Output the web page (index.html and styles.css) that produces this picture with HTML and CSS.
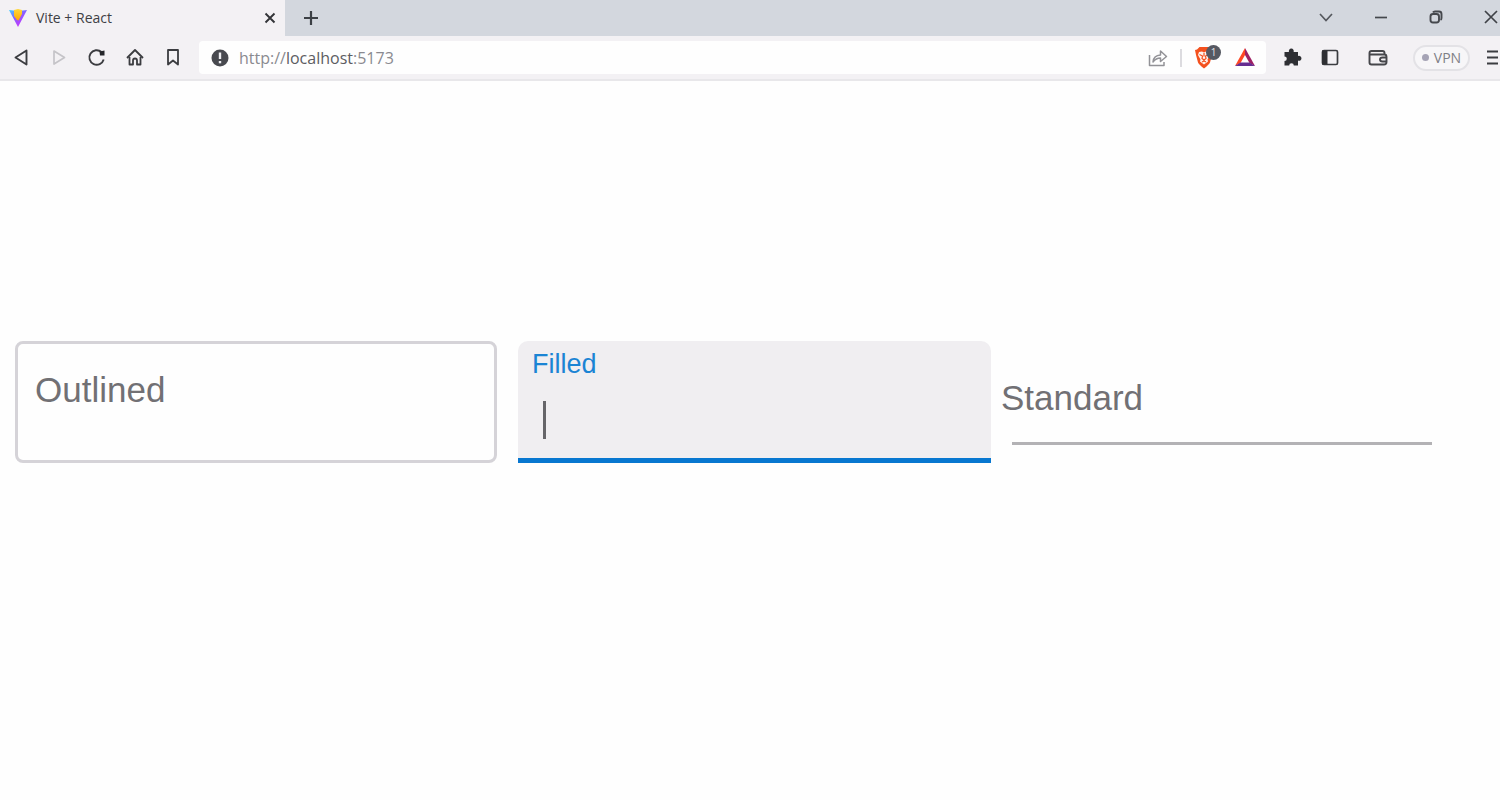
FILE: index.html
```html
<!DOCTYPE html>
<html lang="en">
<head>
    <meta charset="UTF-8">
    <title>Vite + React</title>
    <link rel="stylesheet" href="styles.css">
</head>
<body>
<header class="browser">
    <div class="tab-strip">
        <div class="tab">
            <svg class="icon" width="20" height="20" viewBox="0 0 20 20">
                <defs>
                    <linearGradient id="vite" x1="0" y1="0" x2="0.6" y2="1">
                        <stop offset="0" stop-color="#41d1ff"/>
                        <stop offset="0.5" stop-color="#8b5cff"/>
                        <stop offset="1" stop-color="#c934fe"/>
                    </linearGradient>
                    <linearGradient id="bolt" x1="0" y1="0" x2="0" y2="1">
                        <stop offset="0" stop-color="#ffd83b"/>
                        <stop offset="1" stop-color="#ffa800"/>
                    </linearGradient>
                </defs>
                <path d="M1 2L10 3L19 2L10 19Z" fill="url(#vite)"/>
                <path d="M6 2L10 1L14 2L14 6L10.500 12.500L9 12L6 8Z" fill="url(#bolt)"/>
            </svg>
            <span class="tab-title">Vite + React</span>
            <button class="tool" type="button" aria-label="Close tab">
                <svg width="20" height="20" viewBox="0 0 20 20"><path d="M5.500 5.500L14.500 14.500M14.500 5.500L5.500 14.500" stroke="#333438" stroke-width="1.900"/></svg>
            </button>
        </div>
        <button class="tool new-tab" type="button" aria-label="New tab">
            <svg width="20" height="20" viewBox="0 0 20 20"><path d="M10 3V17M3 10H17" stroke="#3c4045" stroke-width="2.200"/></svg>
        </button>
        <div class="window-controls">
            <button class="tool" type="button" aria-label="Search tabs">
                <svg width="18" height="18" viewBox="0 0 18 18"><path d="M3 5L9 11.500L15 5" fill="none" stroke="#55585e" stroke-width="1.700"/></svg>
            </button>
            <button class="tool" type="button" aria-label="Minimize">
                <svg width="18" height="18" viewBox="0 0 18 18"><path d="M3 8.500H15" stroke="#45484d" stroke-width="1.700"/></svg>
            </button>
            <button class="tool" type="button" aria-label="Restore">
                <svg width="18" height="18" viewBox="0 0 18 18" fill="none" stroke="#45484d" stroke-width="1.900"><rect x="3.500" y="5" width="8.500" height="8.500" rx="2.500"/><path d="M6 3.500Q6.500 2.500 8 2.500H12Q14.500 2.500 14.500 5V9Q14.500 10.500 13.500 11"/></svg>
            </button>
            <button class="tool" type="button" aria-label="Close">
                <svg width="18" height="18" viewBox="0 0 18 18"><path d="M3 2L15 14M15 2L3 14" stroke="#3f4247" stroke-width="1.700"/></svg>
            </button>
        </div>
    </div>

    <div class="toolbar">
        <div class="nav-buttons">
            <button class="tool" type="button" aria-label="Back">
                <svg width="20" height="20" viewBox="0 0 20 20"><path d="M15.500 2.500L4.500 9.500L15.500 16.500Z" fill="none" stroke="#3b3c40" stroke-width="1.900" stroke-linejoin="round"/></svg>
            </button>
            <button class="tool" type="button" aria-label="Forward">
                <svg width="20" height="20" viewBox="0 0 20 20"><path d="M5 3L15.500 9.500L5 16Z" fill="none" stroke="#c5c4c8" stroke-width="1.700" stroke-linejoin="round"/></svg>
            </button>
            <button class="tool" type="button" aria-label="Reload">
                <svg width="20" height="20" viewBox="0 0 20 20"><path d="M14.500 4A7.300 7.300 0 1 0 16.700 11.500" fill="none" stroke="#3b3c40" stroke-width="1.900"/><path d="M17.500 2.500V7.500H13L12.500 3.500Z" fill="#25262a"/></svg>
            </button>
            <button class="tool" type="button" aria-label="Home">
                <svg width="20" height="20" viewBox="0 0 20 20" fill="none" stroke="#3b3c40" stroke-width="1.800" stroke-linejoin="round"><path d="M2 10L10 2L18 10"/><path d="M4.500 9V16.500H8V12.500Q8 10.500 10 10.500Q12 10.500 12 12.500V16.500H15.500V9"/></svg>
            </button>
            <button class="tool" type="button" aria-label="Bookmark">
                <svg width="20" height="20" viewBox="0 0 20 20"><path d="M5 2H15V16.500L10 12.500L5 16.500Z" fill="none" stroke="#3b3c40" stroke-width="1.800" stroke-linejoin="round"/></svg>
            </button>
        </div>

        <div class="address-bar">
            <svg class="icon" width="18" height="18" viewBox="0 0 18 18"><circle cx="9" cy="9" r="8.500" fill="#48494f"/><path d="M9 3.500V10" stroke="#eeeef1" stroke-width="2.400"/><path d="M9 12V14.300" stroke="#eeeef1" stroke-width="2.400"/></svg>
            <a class="url" href="http://localhost:5173">http://<span class="host">localhost</span>:5173</a>
            <button class="tool" type="button" aria-label="Share">
                <svg width="20" height="20" viewBox="0 0 20 20" fill="none" stroke="#929297" stroke-width="1.500" stroke-linejoin="round"><path d="M1.500 7V17.500H16V14"/><path d="M5 14Q5.500 7.500 12.500 7V3L18.500 8.500L12.500 13.500V10Q8 10 5 14Z"/></svg>
            </button>
            <span class="divider"></span>
            <button class="tool shields" type="button" aria-label="Brave Shields">
                <svg width="20" height="22" viewBox="0 0 20 22">
                    <path d="M5.500 0H14.500L17 2.500L19 3L18 8L16 15.500Q15 17.500 10 21.500Q5 17.500 4 15.500L2 8L1 3L3 2.500Z" fill="#f4511e"/>
                    <path d="M5 5L8 4.500L10 5.500L12 4.500L15 5L16 8L13.500 12.500L14 14.500L10 17.500L6 14.500L6.500 12.500L4 8Z" fill="#fff3ee"/>
                    <path d="M5.500 7.500L8.500 9L8 11.500L10 13L12 11.500L11.500 9L14.500 7.500M10 6V9.500M8 15L10 14L12 15" fill="none" stroke="#f4511e" stroke-width="1.200"/>
                </svg>
                <span class="badge">1</span>
            </button>
            <button class="tool" type="button" aria-label="Rewards">
                <svg width="22" height="20" viewBox="0 0 22 20"><path d="M11 0L1 18L6.500 15L11 7Z" fill="#ff4724"/><path d="M11 0L21 18L15.500 15L11 7Z" fill="#9e1f63"/><path d="M1 18H21L15.500 14.500H6.500Z" fill="#662d91"/></svg>
            </button>
        </div>

        <div class="extensions">
            <button class="tool" type="button" aria-label="Extensions">
                <svg width="20" height="20" viewBox="0 0 20 20"><path d="M2.500 4H7A2.500 2.500 0 1 1 11.600 4H16V8A2.500 2.500 0 1 1 16 12.600V17.500H11.800A2.300 2.300 0 0 0 7.200 17.500H2.500V13A2.300 2.300 0 0 0 2.500 8.400Z" fill="#2e2f33"/></svg>
            </button>
            <button class="tool" type="button" aria-label="Sidebar">
                <svg width="20" height="20" viewBox="0 0 20 20"><rect x="2.500" y="2.500" width="15" height="14" rx="1.500" fill="none" stroke="#3b3c40" stroke-width="1.700"/><path d="M2 2.500H7.500V16.500H2Z" fill="#2e2f33"/></svg>
            </button>
            <button class="tool wallet" type="button" aria-label="Wallet">
                <svg width="20" height="20" viewBox="0 0 20 20" fill="none" stroke="#45464a" stroke-width="1.900"><path d="M16.500 6.500V5Q16.500 3 14.500 3H3.500Q1.500 3 1.500 5V14.500Q1.500 16.500 3.500 16.500H16Q18.500 16.500 18.500 14V9Q18.500 6.500 16.500 6.500H2"/><path d="M18 9.500H14.500Q12 9.500 12 11.500Q12 13.500 14.500 13.500H18"/></svg>
            </button>
        </div>
        <button class="vpn" type="button"><span class="dot"></span>VPN</button>
        <button class="tool" type="button" aria-label="Menu">
            <svg width="14" height="20" viewBox="0 0 14 20"><path d="M1 3.500H12M1 9.500H12M1 15.500H12" stroke="#3b3c40" stroke-width="1.800"/></svg>
        </button>
    </div>
</header>

<main>
    <form class="fields">
        <div class="field outlined">
            <label for="outlined">Outlined</label>
            <input type="text" id="outlined">
        </div>
        <div class="field filled">
            <label for="filled">Filled</label>
            <input type="text" id="filled">
            <span class="caret"></span>
        </div>
        <div class="field standard">
            <label for="standard">Standard</label>
            <input type="text" id="standard">
        </div>
    </form>
</main>
</body>
</html>
```

FILE: styles.css
```css
* {
    box-sizing: border-box;
}

body {
    margin: 0;
    background-color: #fefefe;
    font-family: "Liberation Sans", Arial, sans-serif;
}

button {
    font-family: "Open Sans", sans-serif;
}

svg {
    display: block;
    flex: none;
}

/* browser chrome */
.browser {
    font-family: "Open Sans", sans-serif;
    background-color: #f3f1f4;
    border-bottom: 2px solid #e8e7ea;
}

.tool {
    display: block;
    flex: none;
    padding: 0;
    border: 0;
    background: none;
}

.tab-strip {
    display: flex;
    align-items: center;
    height: 36px;
    background-color: #d3d7de;
}

.tab {
    display: flex;
    align-items: center;
    gap: 8px;
    width: 285px;
    height: 36px;
    padding: 0 5px 0 8px;
    background-color: #f3f1f4;
}

.tab-title {
    flex: 1;
    font-size: 14px;
    line-height: 20px;
    color: #3e3f45;
}

.new-tab {
    margin-left: 16px;
}

.window-controls {
    display: flex;
    gap: 37px;
    margin-left: auto;
}

.toolbar {
    display: flex;
    align-items: center;
    height: 43px;
}

.nav-buttons {
    display: flex;
    gap: 18px;
    padding: 0 16px 0 11px;
}

.address-bar {
    display: flex;
    flex: 1;
    align-items: center;
    height: 33px;
    padding: 0 10px 0 12px;
    border-radius: 4px;
    background-color: #fefefe;
}

.url {
    flex: 1;
    margin-left: 10px;
    font-size: 16px;
    line-height: 20px;
    color: #8a8a90;
    text-decoration: none;
}

.host {
    color: #5c5c62;
}

.divider {
    width: 2px;
    height: 18px;
    margin: 0 12px;
    background-color: #dcdbdf;
}

.shields {
    position: relative;
    margin-right: 20px;
}

.badge {
    position: absolute;
    top: -2px;
    left: 12px;
    width: 15px;
    height: 15px;
    border-radius: 50%;
    background-color: #565962;
    color: #e4e4e8;
    font-size: 10px;
    line-height: 15px;
}

.extensions {
    display: flex;
    gap: 18px;
    padding: 0 25px 0 16px;
}

.wallet {
    margin-left: 10px;
}

.vpn {
    display: flex;
    align-items: center;
    justify-content: center;
    gap: 5px;
    width: 57px;
    height: 26px;
    margin-right: 16px;
    padding: 0;
    border: 2px solid #e3e2e6;
    border-radius: 13px;
    background-color: #f7f6f8;
    color: #7f7f86;
    font-size: 14px;
}

.dot {
    width: 7px;
    height: 7px;
    border-radius: 50%;
    background-color: #a5a3b5;
}

/* text fields */
.fields {
    display: grid;
    grid-template-columns: 482fr 473fr 420fr;
    gap: 21px;
    padding: 260px 68px 0 15px;
}

.field {
    display: grid;
    height: 122px;
}

.field label,
.field input {
    grid-area: 1 / 1;
    font-family: inherit;
    font-size: 35px;
    line-height: 40px;
}

.field label {
    z-index: 1;
    justify-self: start;
    align-self: start;
    color: #717074;
}

.field input {
    width: 100%;
    min-width: 0;
    padding: 0 20px;
    border: 0;
    outline: 0;
    background: none;
}

.outlined label {
    margin: 29px 0 0 20px;
}

.outlined input {
    border: 3px solid #d5d3d8;
    border-radius: 8px;
}

.filled {
    position: relative;
}

.filled label {
    margin: 8px 0 0 14px;
    font-size: 27px;
    line-height: 30px;
    color: #1b84d4;
}

.filled input {
    padding-top: 36px;
    border-bottom: 5px solid #0877d0;
    border-radius: 10px 10px 0 0;
    background-color: #f0eef1;
}

.caret {
    position: absolute;
    top: 60px;
    left: 25px;
    z-index: 1;
    width: 3px;
    height: 38px;
    background-color: #666569;
}

.standard {
    height: 104px;
}

.standard label {
    margin: 37px 0 0 -11px;
}

.standard input {
    border-bottom: 3px solid #b3b2b5;
}
```
